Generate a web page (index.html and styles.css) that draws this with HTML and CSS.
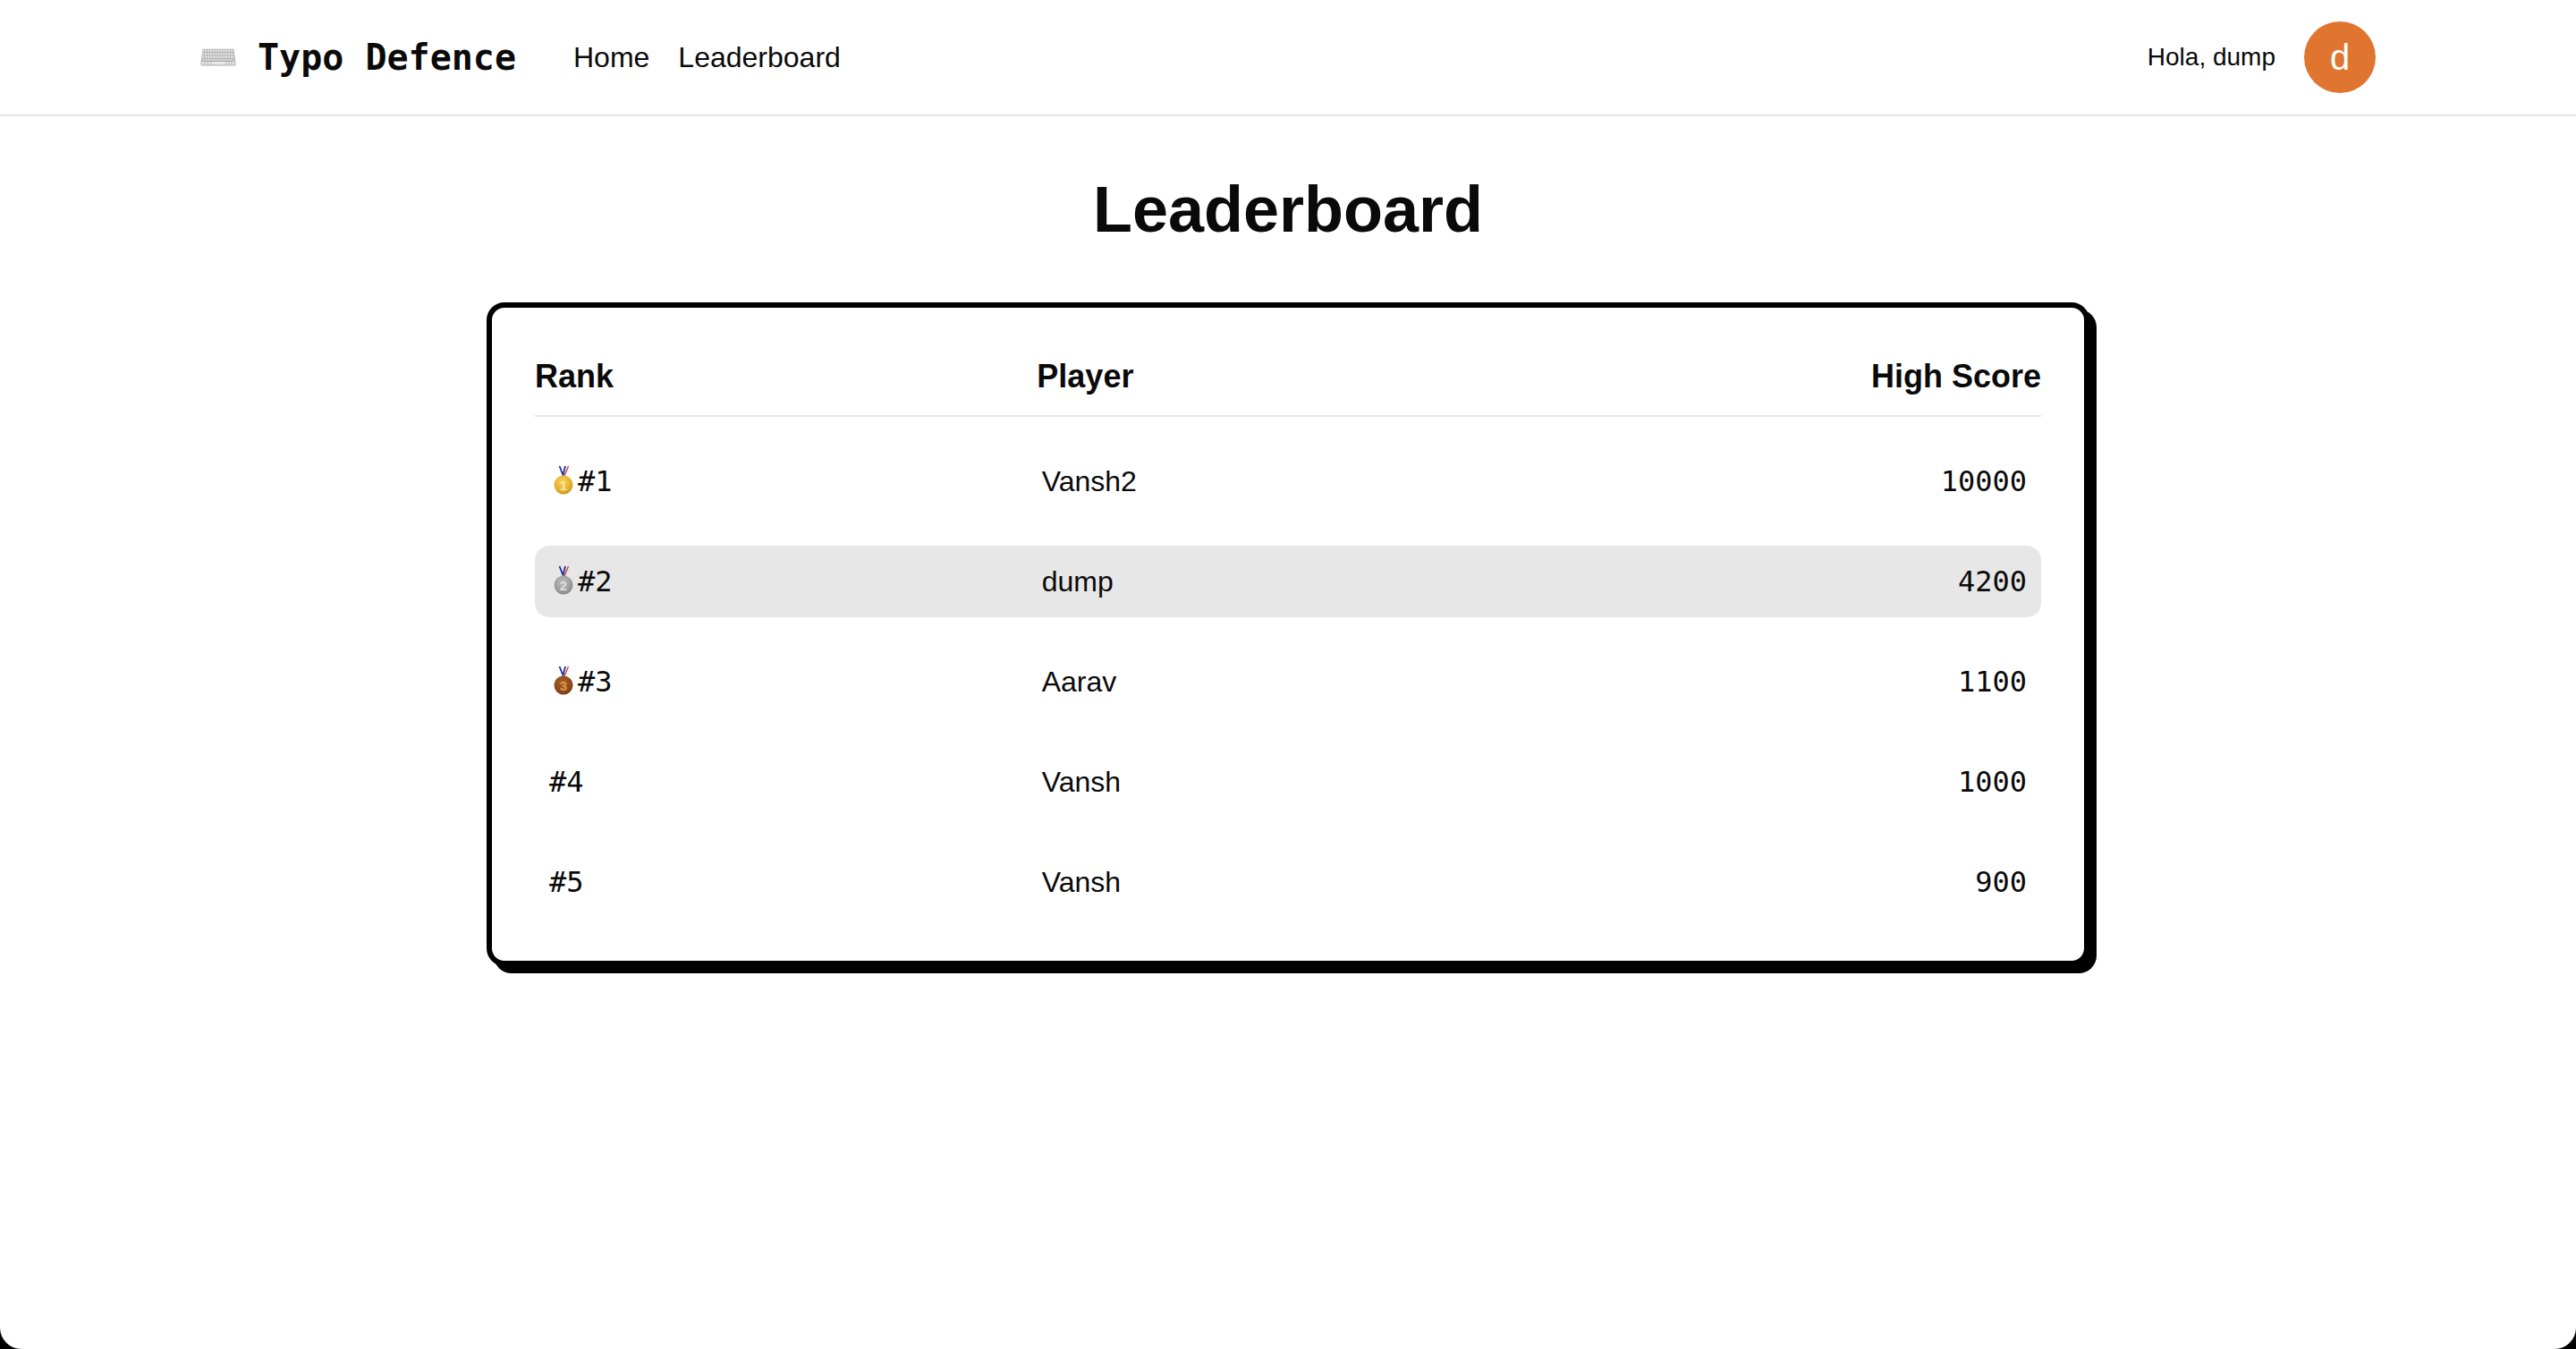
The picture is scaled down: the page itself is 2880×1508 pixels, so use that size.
FILE: index.html
```html
<!DOCTYPE html>
<html lang="en">
<head>
<meta charset="utf-8">
<title>Typo Defence</title>
<link rel="stylesheet" href="styles.css">
</head>
<body>
<div class="app">
  <header class="nav">
    <div class="nav-left">
      <a class="brand">
        <svg class="kbd" viewBox="0 0 40 20" aria-hidden="true">
          <defs>
            <pattern id="keys" width="2.9" height="3.5" patternUnits="userSpaceOnUse" x="2.2" y="1.4">
              <rect width="2.2" height="2.6" rx=".3" fill="#e2e2e2"/>
            </pattern>
          </defs>
          <path d="M2.5 .8 H37.5 L39.6 17.5 Q39.7 19.6 37.5 19.6 H2.5 Q.3 19.6 .4 17.5 Z" fill="#b0b0b0"/>
          <rect x="2.2" y="1.4" width="35.6" height="12.2" fill="url(#keys)"/>
          <rect x="1.6" y="15" width="36.8" height="3.4" fill="#e8e8e8"/>
          <path d="M5 15v3.4M8.5 15v3.4M12 15v3.4M29 15v3.4M32 15v3.4M35 15v3.4" stroke="#a5a5a5" stroke-width=".8"/>
        </svg>
        <span class="brand-name">Typo Defence</span>
      </a>
      <nav class="links">
        <a>Home</a>
        <a>Leaderboard</a>
      </nav>
    </div>
    <div class="nav-right">
      <span class="greeting">Hola, dump</span>
      <span class="avatar">d</span>
    </div>
  </header>

  <main class="main">
    <h1 class="title">Leaderboard</h1>
    <section class="card">
      <div class="head">
        <div>Rank</div>
        <div>Player</div>
        <div class="right">High Score</div>
      </div>
      <div class="rows">
        <div class="row">
          <div class="rank">
            <svg class="medal" viewBox="0 0 32 40" aria-hidden="true">
              <defs>
                <radialGradient id="gold" cx=".45" cy=".35" r=".75"><stop offset="0" stop-color="#f7d65a"/><stop offset=".7" stop-color="#e0a92a"/><stop offset="1" stop-color="#b97e14"/></radialGradient>
              </defs>
              <path d="M11.5 3 L15.5 13 L18 3" fill="none" stroke="#1f2f9e" stroke-width="1.8"/>
              <path d="M21.5 3 L17 14" stroke="#d8392b" stroke-width="1.3"/>
              <circle cx="16" cy="24" r="10.5" fill="url(#gold)"/>
              <text x="16" y="29.5" class="medal-num n1">1</text>
            </svg>
            <span>#1</span>
          </div>
          <div class="player">Vansh2</div>
          <div class="score">10000</div>
        </div>
        <div class="row me">
          <div class="rank">
            <svg class="medal" viewBox="0 0 32 40" aria-hidden="true">
              <defs>
                <radialGradient id="silver" cx=".45" cy=".35" r=".75"><stop offset="0" stop-color="#bdbdbd"/><stop offset=".7" stop-color="#979797"/><stop offset="1" stop-color="#757575"/></radialGradient>
              </defs>
              <path d="M11.5 3 L15.5 13 L18 3" fill="none" stroke="#1f2f9e" stroke-width="1.8"/>
              <path d="M21.5 3 L17 14" stroke="#d8392b" stroke-width="1.3"/>
              <circle cx="16" cy="24" r="10.5" fill="url(#silver)"/>
              <text x="16" y="29.5" class="medal-num n2">2</text>
            </svg>
            <span>#2</span>
          </div>
          <div class="player">dump</div>
          <div class="score">4200</div>
        </div>
        <div class="row">
          <div class="rank">
            <svg class="medal" viewBox="0 0 32 40" aria-hidden="true">
              <defs>
                <radialGradient id="bronze" cx=".45" cy=".35" r=".75"><stop offset="0" stop-color="#a9622a"/><stop offset=".7" stop-color="#87471a"/><stop offset="1" stop-color="#64300f"/></radialGradient>
              </defs>
              <path d="M11.5 3 L15.5 13 L18 3" fill="none" stroke="#1f2f9e" stroke-width="1.8"/>
              <path d="M21.5 3 L17 14" stroke="#d8392b" stroke-width="1.3"/>
              <circle cx="16" cy="24" r="10.5" fill="url(#bronze)"/>
              <text x="16" y="29.5" class="medal-num n3">3</text>
            </svg>
            <span>#3</span>
          </div>
          <div class="player">Aarav</div>
          <div class="score">1100</div>
        </div>
        <div class="row">
          <div class="rank"><span>#4</span></div>
          <div class="player">Vansh</div>
          <div class="score">1000</div>
        </div>
        <div class="row">
          <div class="rank"><span>#5</span></div>
          <div class="player">Vansh</div>
          <div class="score">900</div>
        </div>
      </div>
    </section>
  </main>
</div>
</body>
</html>
```

FILE: styles.css
```css
* { box-sizing: border-box; }

html, body {
  margin: 0;
  height: 100%;
  background: #000;
}

body {
  font-family: "Liberation Sans", Arial, sans-serif;
  color: #0a0a0a;
}

.app {
  height: 100vh;
  background: #fff;
  border-radius: 0 0 24px 24px;
  overflow: hidden;
}

.nav {
  height: 130px;
  padding: 0 224px;
  border-bottom: 2px solid #e5e5e5;
  display: flex;
  align-items: center;
  justify-content: space-between;
}

.nav-left {
  display: flex;
  align-items: center;
  gap: 64px;
}

.brand {
  display: flex;
  align-items: center;
  gap: 24px;
}

.kbd {
  width: 40px;
  height: 20px;
}

.brand-name {
  font-family: "DejaVu Sans Mono", monospace;
  font-size: 40px;
  font-weight: 700;
}

.links {
  display: flex;
  gap: 32px;
  font-size: 32px;
}

.nav-right {
  display: flex;
  align-items: center;
  gap: 32px;
}

.greeting {
  font-size: 28px;
}

.avatar {
  width: 80px;
  height: 80px;
  border-radius: 50%;
  background: #e07530;
  color: #fff;
  font-size: 40px;
  display: flex;
  align-items: center;
  justify-content: center;
}

.main {
  padding-top: 64px;
}

.title {
  margin: 0 0 64px;
  font-size: 72px;
  line-height: 80px;
  font-weight: 700;
  text-align: center;
}

.card {
  width: 1792px;
  margin: 0 auto;
  padding: 48px;
  background: #fff;
  border: 6px solid #000;
  border-radius: 20px;
  box-shadow: 8px 8px 0 #000;
}

.head,
.row {
  display: grid;
  grid-template-columns: repeat(3, 1fr);
  align-items: center;
}

.head {
  height: 74px;
  padding-bottom: 15px;
  border-bottom: 2px solid #e5e5e5;
  font-size: 36px;
  font-weight: 700;
}

.right { text-align: right; }

.rows {
  margin-top: 32px;
  display: flex;
  flex-direction: column;
  gap: 32px;
}

.row {
  height: 80px;
  padding: 0 16px;
  border-radius: 16px;
  font-size: 32px;
}

.me { background: #e7e7e7; }

.rank,
.score {
  font-family: "DejaVu Sans Mono", monospace;
}

.rank {
  display: flex;
  align-items: center;
}

.medal {
  width: 32px;
  height: 40px;
  flex: none;
}

.medal-num {
  font-family: "Liberation Sans", Arial, sans-serif;
  font-size: 15px;
  font-weight: 700;
  text-anchor: middle;
}

.n1 { fill: #fbeaa0; }
.n2 { fill: #dedede; }
.n3 { fill: #e0954a; }

.score { text-align: right; }
```
